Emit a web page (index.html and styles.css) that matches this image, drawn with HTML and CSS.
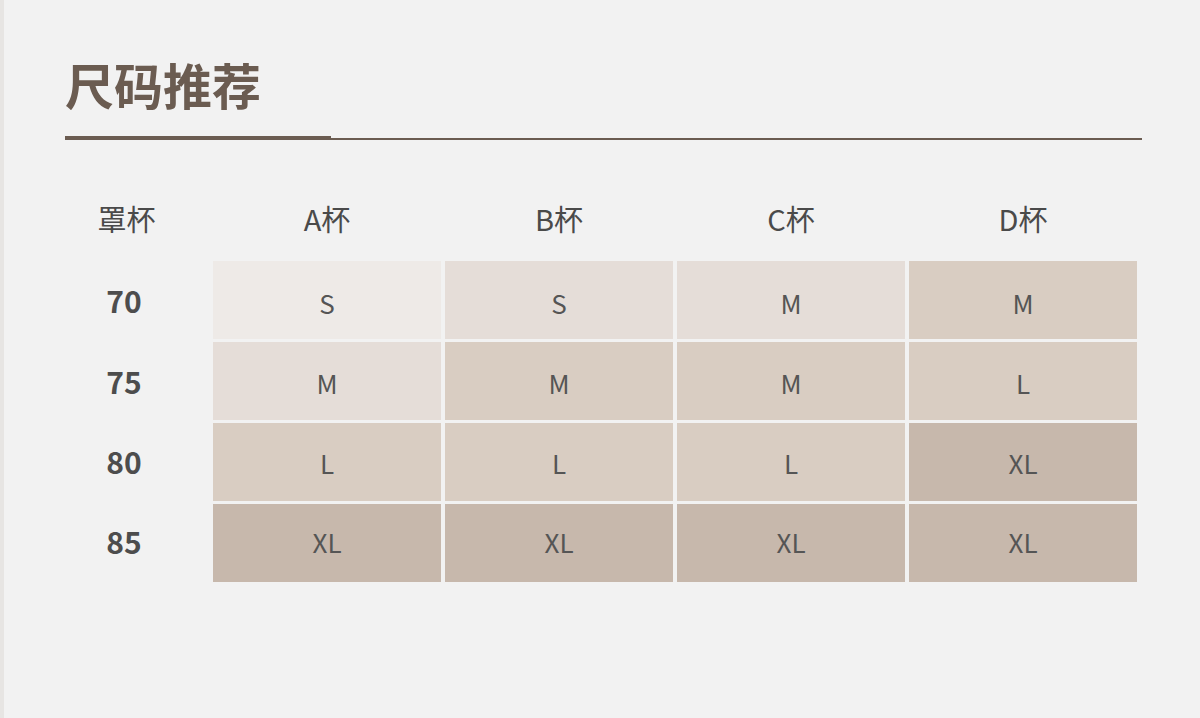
FILE: index.html
```html
<!DOCTYPE html>
<html lang="zh-CN">
<head>
<meta charset="utf-8">
<title>尺码推荐</title>
<link rel="stylesheet" href="styles.css">
</head>
<body>
<div class="page">
  <h1 class="title">尺码推荐</h1>
  <div class="rule"><div class="rule-thick"></div><div class="rule-thin"></div></div>
  <div class="table">
    <div class="head label">罩杯</div>
    <div class="head">A杯</div>
    <div class="head">B杯</div>
    <div class="head">C杯</div>
    <div class="head">D杯</div>

    <div class="rowlabel r1">70</div>
    <div class="cell c1 r1">S</div>
    <div class="cell c2 r1">S</div>
    <div class="cell c2 r1">M</div>
    <div class="cell c3 r1">M</div>

    <div class="rowlabel r2">75</div>
    <div class="cell c2 r2">M</div>
    <div class="cell c3 r2">M</div>
    <div class="cell c3 r2">M</div>
    <div class="cell c3 r2">L</div>

    <div class="rowlabel r3">80</div>
    <div class="cell c3 r3">L</div>
    <div class="cell c3 r3">L</div>
    <div class="cell c3 r3">L</div>
    <div class="cell c4 r3">XL</div>

    <div class="rowlabel r4">85</div>
    <div class="cell c4 r4">XL</div>
    <div class="cell c4 r4">XL</div>
    <div class="cell c4 r4">XL</div>
    <div class="cell c4 r4">XL</div>
  </div>
</div>
</body>
</html>
```

FILE: styles.css
```css
html, body {
  margin: 0;
  padding: 0;
  background: #f2f2f2;
}
body {
  font-family: "Noto Sans CJK SC", "Noto Sans", sans-serif;
  color: #4f4f4f;
}
.page {
  box-sizing: border-box;
  width: 1200px;
  height: 718px;
  border-left: 4px solid #e7e5e3;
  padding: 60px 58px 0 61px;
}
.title {
  margin: 0;
  font-size: 49px;
  line-height: 48px;
  font-weight: 700;
  color: #6b5c51;
  letter-spacing: 0;
}
.rule {
  display: flex;
  align-items: flex-end;
  margin-top: 28px;
  height: 4px;
}
.rule-thick {
  width: 266px;
  height: 4px;
  background: #6b5c51;
}
.rule-thin {
  flex: 1;
  height: 2px;
  background: #6b5c51;
}
.table {
  display: grid;
  grid-template-columns: 148px repeat(4, 228px);
  grid-auto-rows: 78px;
  column-gap: 4px;
  row-gap: 3px;
  margin-top: 40px;
  margin-left: -4px;
}
.head {
  display: flex;
  align-items: center;
  justify-content: center;
  padding-bottom: 2px;
  font-size: 29px;
  color: #4a4a4a;
}
.head.label {
  padding-right: 17px;
}
.rowlabel {
  display: flex;
  align-items: center;
  justify-content: center;
  padding-right: 22px;
  font-size: 30px;
  font-weight: 700;
  color: #4d4d4d;
}
.rowlabel.r2 { padding-bottom: 1px; }
.rowlabel.r3 { padding-bottom: 2px; }
.rowlabel.r4 { padding-bottom: 4px; }
.cell {
  display: flex;
  align-items: center;
  justify-content: center;
  font-size: 26px;
  color: #555555;
}
.cell.r1 { padding-top: 4px; }
.cell.r2 { padding-top: 2px; }
.cell.r4 { padding-bottom: 3px; }
.c1 { background: #eeeae7; }
.c2 { background: #e5ddd8; }
.c3 { background: #d9cdc2; }
.c4 { background: #c7b8ac; }
```
